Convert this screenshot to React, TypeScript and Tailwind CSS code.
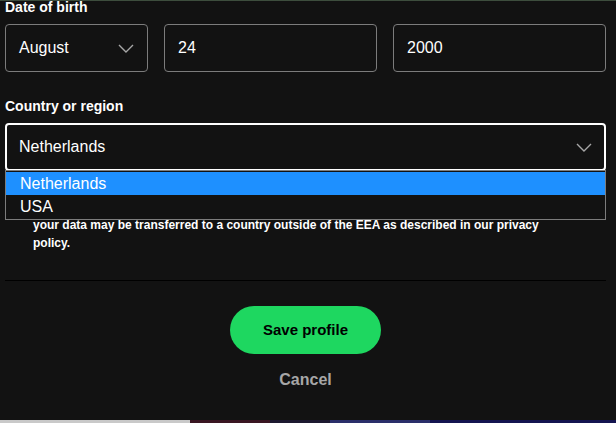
const FONT = "font-['Liberation_Sans',Arial,sans-serif]";

const Chevron = ({ className }: { className?: string }) => (
  <svg viewBox="0 0 16 9" className={className} fill="none" stroke="#a7a7a7" strokeWidth="1.4">
    <path d="M1 1l7 7 7-7" />
  </svg>
);

const FieldBox = ({ value, withChevron, className }: { value: string; withChevron?: boolean; className: string }) => (
  <div
    className={`flex h-[48px] items-center justify-between rounded-[4px] border border-[#7c7c7c] bg-[#121212] pl-[13px] pr-[13px] text-[16px] text-white ${className}`}
  >
    <span>{value}</span>
    {withChevron && <Chevron className="h-[9px] w-[16px]" />}
  </div>
);

const COUNTRIES = ['Netherlands', 'USA'];

export default function App() {
  return (
    <div className={`flex h-[423px] w-[616px] flex-col overflow-hidden bg-[#121212] ${FONT}`}>
      <div className="h-px w-full shrink-0 bg-[#3d4d3d]" />
      <div className="flex flex-1 flex-col px-[5px] pr-[10px]">
        <p className="-mt-[2px] text-[14px] font-bold leading-[16px] text-white">Date of birth</p>
        <div className="mt-[9px] flex gap-4">
          <FieldBox value="August" withChevron className="w-[143px]" />
          <FieldBox value="24" className="w-[213px]" />
          <FieldBox value="2000" className="w-[213px]" />
        </div>

        <p className="mt-[26px] text-[14px] font-bold leading-[16px] text-white">Country or region</p>

        <div className="relative mt-[9px]">
          <div className="flex h-[48px] items-center justify-between rounded-[4px] border-2 border-white bg-[#121212] pl-[12px] pr-[12px] text-[16px] text-white">
            <span>Netherlands</span>
            <Chevron className="h-[9px] w-[16px]" />
          </div>
          <ul className="absolute left-0 right-0 top-[47px] z-10 border border-[#7c7c7c] bg-[#121212] py-px text-[16px] leading-[23px] text-white">
            {COUNTRIES.map((c, i) => (
              <li key={c} className={`pl-[14px] ${i === 0 ? 'bg-[#1e90ff]' : ''}`}>
                {c}
              </li>
            ))}
          </ul>

          <p className="ml-[28px] mt-[45px] text-[12px] font-bold leading-[18px] text-white">
            your data may be transferred to a country outside of the EEA as described in our privacy
            <br />
            policy.
          </p>
        </div>

        <div className="mt-[28px] h-px w-full bg-black" />

        <div className="mt-[25px] flex flex-col items-center">
          <button
            type="button"
            className="h-[48px] w-[151px] rounded-full bg-[#1ed760] text-[15px] font-bold text-black"
          >
            Save profile
          </button>
          <button type="button" className="mt-[16px] text-[16px] font-bold leading-[20px] text-[#a7a7a7]">
            Cancel
          </button>
        </div>
      </div>
      <div className="flex h-[3px] w-full shrink-0">
        <div className="w-[190px] bg-[#c9c9c9]" />
        <div className="w-[80px] bg-[#3a1622]" />
        <div className="w-[60px] bg-[#1c1830]" />
        <div className="w-[100px] bg-[#2a2f6a]" />
        <div className="flex-1 bg-[#141450]" />
      </div>
    </div>
  );
}
